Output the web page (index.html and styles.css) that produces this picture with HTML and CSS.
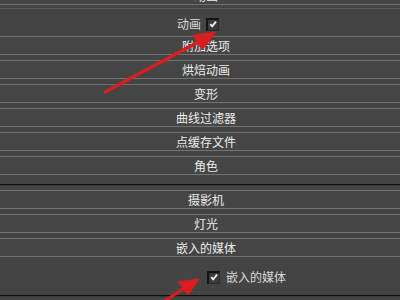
FILE: index.html
```html
<!DOCTYPE html>
<html lang="zh-CN">
<head>
<meta charset="utf-8">
<link rel="stylesheet" href="styles.css">
</head>
<body>
<div class="panel">
  <div class="btn btn-cut">动画</div>
  <div class="rollout rollout-top">
    <div class="check-row check-row-left">
      <span class="label">动画</span>
      <span class="cb"><svg viewBox="0 0 12 12" width="12" height="12"><path d="M3.2 6.2 L5.2 8.3 L9 3.6" fill="none" stroke="#f2f2f2" stroke-width="1.8"/></svg></span>
    </div>
  </div>
  <div class="btn btn-first">附加选项</div>
  <div class="btn">烘焙动画</div>
  <div class="btn">变形</div>
  <div class="btn">曲线过滤器</div>
  <div class="btn">点缓存文件</div>
  <div class="btn">角色</div>
  <div class="sep"></div>
  <div class="btn btn-after-sep">摄影机</div>
  <div class="btn">灯光</div>
  <div class="btn">嵌入的媒体</div>
  <div class="rollout rollout-bottom">
    <div class="check-row check-row-right">
      <span class="cb"><svg viewBox="0 0 12 12" width="12" height="12"><path d="M3.2 6.2 L5.2 8.3 L9 3.6" fill="none" stroke="#f2f2f2" stroke-width="1.8"/></svg></span>
      <span class="label">嵌入的媒体</span>
    </div>
  </div>
  <div class="sep sep-bottom"></div>
</div>
<svg class="arrows" width="400" height="300" viewBox="0 0 400 300">
  <g fill="#d81e1e" stroke="#d81e1e">
    <line x1="105" y1="92" x2="200" y2="41" stroke-width="3.2" stroke-linecap="round"/>
    <polygon points="216,32 193,35 202,50" stroke-width="1"/>
    <line x1="160" y1="304" x2="186" y2="287" stroke-width="3.2" stroke-linecap="round"/>
    <polygon points="199,279 178,282 188,295" stroke-width="1"/>
  </g>
</svg>
</body>
</html>
```
FILE: styles.css
```css
html, body {
  margin: 0;
  padding: 0;
  background: #444444;
  width: 400px;
  height: 300px;
  overflow: hidden;
  font-family: "Noto Sans CJK SC", "Noto Sans", sans-serif;
}

.panel {
  display: flex;
  flex-direction: column;
  width: 400px;
}

.btn {
  height: 17px;
  line-height: 17px;
  border-top: 1px solid #727272;
  border-bottom: 1px solid #727272;
  background: #454545;
  color: #ececec;
  font-size: 12px;
  text-align: center;
  padding-left: 12px;
  margin-top: 5px;
}

.btn-cut {
  margin-top: -14px;
}

.btn-first {
  margin-top: 0;
}

.rollout-top {
  margin-top: 3px;
  border-top: 1px solid #5a5a5a;
  padding: 9px 0 6px;
  height: 12px;
}

.rollout-bottom {
  padding: 14px 0 12px;
}

.check-row {
  display: flex;
  align-items: center;
  height: 12px;
  font-size: 12px;
  color: #d8d8d8;
}

.check-row-left {
  padding-left: 177px;
  gap: 5px;
}

.check-row-right {
  padding-left: 207px;
  gap: 6px;
}

.label {
  line-height: 12px;
}

.cb {
  width: 10px;
  height: 10px;
  border-top: 2px solid #141414;
  border-left: 2px solid #141414;
  border-right: 1px solid #2a2a2a;
  border-bottom: 1px solid #2a2a2a;
  background: #3a3a3a;
  display: flex;
  align-items: center;
  justify-content: center;
  overflow: hidden;
}

.cb svg {
  flex: none;
  margin-left: -1px;
  margin-top: -1px;
}

.sep {
  margin-top: 9px;
  height: 1px;
  background: #0e0e0e;
  border-bottom: 1px solid #3a3a3a;
}

.btn-after-sep {
  margin-top: 4px;
}

.sep-bottom {
  margin-top: 0;
  height: 1px;
}

.arrows {
  position: absolute;
  left: 0;
  top: 0;
  pointer-events: none;
}
```
